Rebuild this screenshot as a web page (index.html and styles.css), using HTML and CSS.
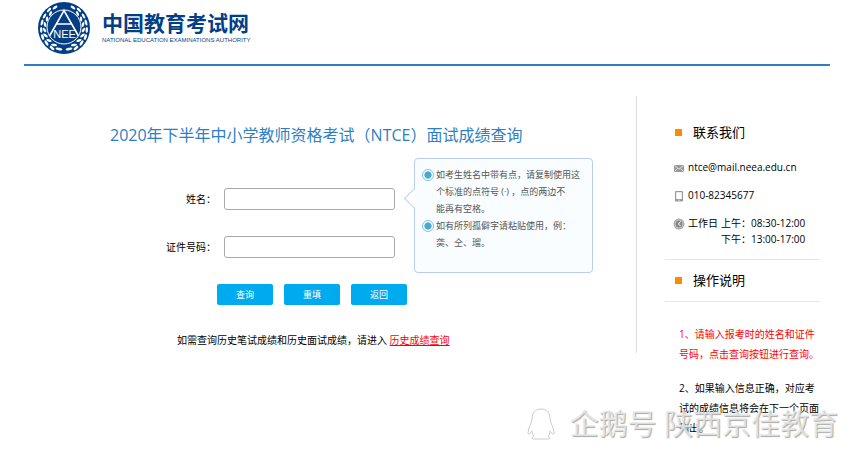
FILE: index.html
```html
<!DOCTYPE html>
<html lang="zh-CN">
<head>
    <meta charset="UTF-8">
    <meta name="viewport" content="width=device-width, initial-scale=1.0">
    <title>中国教育考试网</title>
    <link rel="stylesheet" href="styles.css">
</head>
<body>
    <header class="header">
        <svg class="logo" viewBox="0 0 52 52" aria-hidden="true">
            <defs>
                <g id="laurel" fill="#fff">
                    <ellipse cx="21" cy="47" rx="3.4" ry="1.3" transform="rotate(12 21 47)"/>
                    <ellipse cx="16" cy="43" rx="3" ry="1.2" transform="rotate(8 16 43)"/>
                    <ellipse cx="14" cy="46" rx="3" ry="1.3" transform="rotate(42 14 46)"/>
                    <ellipse cx="11" cy="38.5" rx="2.8" ry="1.2" transform="rotate(20 11 38.5)"/>
                    <ellipse cx="8.5" cy="41" rx="3" ry="1.3" transform="rotate(55 8.5 41)"/>
                    <ellipse cx="7.5" cy="33.5" rx="2.8" ry="1.2" transform="rotate(38 7.5 33.5)"/>
                    <ellipse cx="4.6" cy="35" rx="3" ry="1.3" transform="rotate(72 4.6 35)"/>
                    <ellipse cx="6.5" cy="28" rx="2.6" ry="1.2" transform="rotate(55 6.5 28)"/>
                    <ellipse cx="3.2" cy="28" rx="3" ry="1.2" transform="rotate(88 3.2 28)"/>
                    <ellipse cx="7" cy="22.5" rx="2.6" ry="1.2" transform="rotate(75 7 22.5)"/>
                    <ellipse cx="4" cy="20.5" rx="3" ry="1.2" transform="rotate(105 4 20.5)"/>
                    <ellipse cx="9" cy="17" rx="2.6" ry="1.2" transform="rotate(95 9 17)"/>
                    <ellipse cx="6.5" cy="14" rx="2.8" ry="1.2" transform="rotate(120 6.5 14)"/>
                    <ellipse cx="12.5" cy="11.5" rx="2.6" ry="1.2" transform="rotate(115 12.5 11.5)"/>
                    <ellipse cx="11" cy="8" rx="2.8" ry="1.2" transform="rotate(135 11 8)"/>
                    <ellipse cx="17" cy="5.5" rx="2.8" ry="1.2" transform="rotate(145 17 5.5)"/>
                </g>
            </defs>
            <circle cx="26" cy="26" r="26" fill="#043f85"/>
            <use href="#laurel"/>
            <use href="#laurel" transform="translate(52 0) scale(-1 1)"/>
            <circle cx="26" cy="25" r="17" fill="#043f85" stroke="#fff" stroke-width="1"/>
            <path d="M11.5 34 L26 8.5 L40.5 34 M18.5 22 H33.5" fill="none" stroke="#fff" stroke-width="1.6"/>
            <text class="logo-text" x="26.5" y="36" text-anchor="middle">NEE</text>
        </svg>
        <div class="brand">
            <div class="brand-name">中国教育考试网</div>
            <div class="brand-sub">NATIONAL EDUCATION EXAMINATIONS AUTHORITY</div>
        </div>
    </header>

    <div class="content">
        <main class="main">
            <h1>2020年下半年中小学教师资格考试（NTCE）面试成绩查询</h1>
            <div class="query">
                <form class="form">
                    <div class="field">
                        <label for="name">姓名：</label>
                        <input type="text" id="name">
                    </div>
                    <div class="field">
                        <label for="idcard">证件号码：</label>
                        <input type="text" id="idcard">
                    </div>
                    <div class="buttons">
                        <button type="submit">查询</button>
                        <button type="reset">重填</button>
                        <button type="button">返回</button>
                    </div>
                </form>
                <ul class="tips">
                    <li>如考生姓名中带有点，请复制使用这个标准的点符号 (·) ，点的两边不<br>能再有空格。</li>
                    <li>如有所列孤僻字请粘贴使用，例：䶮、仝、瑠。</li>
                </ul>
            </div>
            <p class="history">如需查询历史笔试成绩和历史面试成绩，请进入 <a href="#">历史成绩查询</a></p>
        </main>

        <aside class="sidebar">
            <h2>联系我们</h2>
            <ul class="contact">
                <li>
                    <svg viewBox="0 0 12 12" aria-hidden="true">
                        <rect x="1" y="3" width="10" height="7" rx="1" fill="#999"/>
                        <path d="M1.5 3.5 L6 7 L10.5 3.5 M1.5 9.5 L4.5 6.5 M10.5 9.5 L7.5 6.5" fill="none" stroke="#eee" stroke-width=".8"/>
                    </svg>
                    <span>ntce@mail.neea.edu.cn</span>
                </li>
                <li>
                    <svg viewBox="0 0 12 12" aria-hidden="true">
                        <rect x="2" y="1" width="8" height="10.5" rx="1" fill="#999"/>
                        <rect x="3.2" y="2.2" width="5.6" height="6.8" fill="#fff"/>
                        <circle cx="6" cy="10.2" r=".6" fill="#fff"/>
                    </svg>
                    <span>010-82345677</span>
                </li>
                <li>
                    <svg viewBox="0 0 12 12" aria-hidden="true">
                        <circle cx="6" cy="6" r="5.5" fill="#aaa"/>
                        <circle cx="6" cy="6" r="4" fill="#888" stroke="#ddd" stroke-width=".6"/>
                        <path d="M7.5 3.5 L5.5 6 L7.5 8" fill="none" stroke="#fff" stroke-width="1"/>
                    </svg>
                    <span>工作日</span>
                    <span>上午：08:30-12:00<br>下午：13:00-17:00</span>
                </li>
            </ul>
            <h2 class="boxed">操作说明</h2>
            <div class="notes">
                <p class="important">1、请输入报考时的姓名和证件号码，点击查询按钮进行查询。</p>
                <p>2、如果输入信息正确，对应考试的成绩信息将会在下一个页面列出。</p>
            </div>
        </aside>
    </div>

    <div class="watermark">
        <svg viewBox="0 0 28 32" aria-hidden="true">
            <path d="M14 1 C8 1 5 5 5 11 C5 15 1 19 1 25 C1 27 3 26 5 23 C5 26 6 27 7 28 C3 31 6 31 9 31 H19 C22 31 25 31 21 28 C22 27 23 26 23 23 C25 26 27 27 27 25 C27 19 23 15 23 11 C23 5 20 1 14 1 Z"/>
        </svg>
        <span>企鹅号 陕西京佳教育</span>
    </div>
</body>
</html>
```

FILE: styles.css
```css
* {
    box-sizing: border-box;
}
body {
    margin: 0;
    padding: 0 26px 0 24px;
    background: #fff;
    color: #000;
    font-family: "Open Sans", "Noto Sans CJK SC", sans-serif;
    font-size: 10px;
    line-height: 16px;
}
h1, h2, p, ul {
    margin: 0;
    padding: 0;
    font-weight: normal;
}
ul {
    list-style: none;
}
.header {
    display: flex;
    align-items: flex-start;
    gap: 12px;
    height: 66px;
    padding: 2px 14px 0;
    border-bottom: 2px solid #2d7fc5;
}
.logo {
    width: 52px;
    height: 52px;
}
.logo-text {
    fill: #fff;
    font-family: "Liberation Sans", sans-serif;
    font-size: 11px;
}
.brand {
    padding-top: 8px;
    color: #043f85;
    white-space: nowrap;
}
.brand-name {
    font-size: 21px;
    font-weight: bold;
    line-height: 26px;
}
.brand-sub {
    font-family: "Liberation Sans", sans-serif;
    font-size: 6px;
    line-height: 8px;
}
.content {
    display: flex;
    padding-top: 30px;
}
.main {
    flex: 1;
    height: 257px;
    border-right: 1px solid #ddd;
}
h1 {
    padding: 27px 0 0 86px;
    color: #2d7fc5;
    font-size: 16px;
    line-height: 24px;
}
.query {
    display: flex;
    gap: 7px;
    margin-top: 11px;
}
.form {
    width: 383px;
    padding-top: 30px;
}
.field {
    display: flex;
    justify-content: flex-end;
    align-items: center;
    gap: 8px;
    margin-bottom: 26px;
    padding-right: 12px;
}
.field input {
    width: 171px;
    height: 22px;
    padding: 0 6px;
    border: 1px solid #aaa;
    border-radius: 3px;
    font: inherit;
}
.buttons {
    display: flex;
    justify-content: flex-end;
    gap: 11px;
}
.buttons button {
    width: 56px;
    height: 21px;
    padding: 0;
    border: 0;
    border-radius: 2px;
    background: #00aaef;
    color: #fff;
    font: inherit;
    font-size: 9px;
}
.tips {
    position: relative;
    width: 179px;
    height: 115px;
    padding: 7px 11px 0 21px;
    border: 1px solid #b9cdec;
    border-radius: 4px;
    background: #f9fdff;
    color: #555;
    font-size: 9px;
    line-height: 17px;
}
.tips::before {
    content: "";
    position: absolute;
    top: 32px;
    left: -8px;
    width: 14px;
    height: 14px;
    border: 1px solid #b9cdec;
    border-width: 0 0 1px 1px;
    background: linear-gradient(45deg, #fff 50%, transparent 50%);
    transform: rotate(45deg);
}
.tips li {
    position: relative;
}
.tips li::before {
    content: "";
    position: absolute;
    top: 3px;
    left: -14px;
    width: 10px;
    height: 10px;
    border: 1px solid #7cc4e2;
    border-radius: 50%;
    background: radial-gradient(circle closest-side, #4aa9d3 65%, #fff 80%);
}
.history {
    padding: 27px 0 0 153px;
}
.history a {
    color: #f00;
}
.sidebar {
    width: 193px;
    padding: 26px 10px 0 28px;
}
h2 {
    display: flex;
    align-items: center;
    gap: 11px;
    padding-left: 10px;
    font-size: 13px;
    line-height: 20px;
}
h2::before {
    content: "";
    width: 7px;
    height: 7px;
    background: #ff8a00;
}
.contact {
    padding: 17px 0 12px 8px;
}
.contact li {
    display: flex;
    gap: 3px;
    margin-bottom: 12px;
    white-space: nowrap;
}
.contact li:last-child {
    margin-bottom: 0;
}
.contact svg {
    width: 12px;
    height: 12px;
    margin-top: 3px;
}
.boxed {
    padding-top: 10px;
    padding-bottom: 11px;
    border: 1px solid #e5e5e5;
    border-width: 1px 0;
}
.notes {
    padding: 22px 0 0 14px;
    line-height: 20px;
}
.notes p {
    margin-bottom: 14px;
}
.important {
    color: #f00;
}
.watermark {
    position: absolute;
    right: 18px;
    bottom: 9px;
    display: flex;
    align-items: center;
    gap: 14px;
    color: rgba(235, 235, 235, .8);
    font-size: 29px;
    line-height: 40px;
    text-shadow: 1px 1px 1px #aaa;
}
.watermark svg {
    width: 28px;
    height: 32px;
    fill: #fff;
    stroke: #ccc;
}
```
